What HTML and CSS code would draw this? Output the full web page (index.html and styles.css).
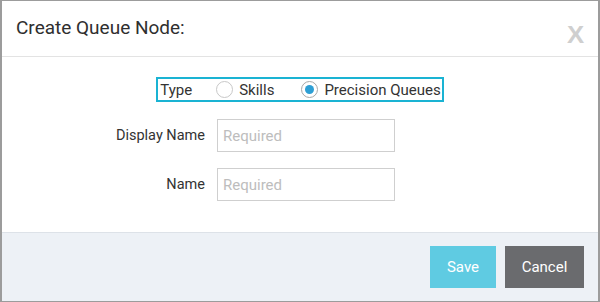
FILE: index.html
```html
<!DOCTYPE html>
<html lang="en">
<head>
    <meta charset="UTF-8">
    <title>Create Queue Node</title>
    <link rel="stylesheet" href="styles.css">
</head>
<body>
    <div class="dialog">
        <div class="dialog-header">
            <h2>Create Queue Node:</h2>
            <span class="close">X</span>
        </div>

        <div class="dialog-body">
            <div class="type-row">
                <div class="type-box">
                    <span class="type-label">Type</span>
                    <label class="radio"><span class="circle"></span>Skills</label>
                    <label class="radio"><span class="circle checked"></span>Precision Queues</label>
                </div>
            </div>

            <div class="field">
                <label>Display Name</label>
                <input type="text" placeholder="Required">
            </div>
            <div class="field">
                <label>Name</label>
                <input type="text" placeholder="Required">
            </div>
        </div>

        <div class="dialog-footer">
            <button class="btn save">Save</button>
            <button class="btn cancel">Cancel</button>
        </div>
    </div>
</body>
</html>
```

FILE: styles.css
```css
body {
    margin: 0;
    font-family: Roboto, "Liberation Sans", Arial, sans-serif;
    color: #333;
}
.dialog {
    width: 600px;
    height: 302px;
    box-sizing: border-box;
    border: 1px solid #9c9c9c;
    border-left-width: 2px;
    border-right-width: 2px;
    display: flex;
    flex-direction: column;
    background: #fff;
}
.dialog-header {
    height: 55px;
    border-bottom: 1px solid #e3e3e3;
    display: flex;
    align-items: center;
    justify-content: space-between;
    padding: 0 14px;
}
.dialog-header h2 {
    margin: 0;
    font-size: 19px;
    font-weight: normal;
    color: #2f2f2f;
    padding-bottom: 2px;
}
.close {
    font-family: "Liberation Sans", Arial, sans-serif;
    font-weight: bold;
    font-size: 23px;
    color: #cfcfcf;
    margin-top: 14px;
    margin-right: 1px;
    transform: scaleX(1.12);
}
.dialog-body {
    height: 175px;
    box-sizing: border-box;
    padding-top: 20px;
}
.type-row {
    display: flex;
    justify-content: center;
    margin-bottom: 17px;
}
.type-box {
    display: flex;
    align-items: center;
    height: 25px;
    box-sizing: border-box;
    border: 2px solid #1ab3d3;
    padding: 0 1px 0 2px;
    font-size: 15px;
    color: #333;
}
.type-label {
    margin-right: 24px;
}
.radio {
    display: flex;
    align-items: center;
}
.radio + .radio {
    margin-left: 27px;
}
.circle {
    width: 15px;
    height: 15px;
    border: 1px solid #c8c8c8;
    border-radius: 50%;
    margin-right: 6px;
    position: relative;
    background: #fff;
}
.circle.checked {
    border-color: #a8a8a8;
}
.circle.checked::after {
    content: "";
    position: absolute;
    top: 3px;
    left: 3px;
    width: 9px;
    height: 9px;
    border-radius: 50%;
    background: #2e9fd4;
}
.field {
    display: flex;
    align-items: center;
    margin-bottom: 16px;
}
.field label {
    width: 203px;
    text-align: right;
    font-size: 14.5px;
    color: #333;
}
.field input {
    margin-left: 12px;
    width: 178px;
    height: 33px;
    box-sizing: border-box;
    border: 1px solid #cfcfcf;
    padding: 0 5px;
    font-family: Roboto, "Liberation Sans", Arial, sans-serif;
    font-size: 15px;
    outline: none;
}
.field input::placeholder {
    color: #bdbdbd;
}
.dialog-footer {
    flex: 1;
    border-top: 1px solid #dde2e8;
    background: #edf1f6;
    display: flex;
    justify-content: flex-end;
    align-items: center;
    gap: 9px;
    padding-right: 14px;
}
.btn {
    height: 42px;
    border: none;
    color: #fff;
    font-family: Roboto, "Liberation Sans", Arial, sans-serif;
    font-size: 15px;
    padding: 0;
}
.save {
    width: 66px;
    background: #5fcbe2;
}
.cancel {
    width: 79px;
    background: #6a6b6e;
}
```
